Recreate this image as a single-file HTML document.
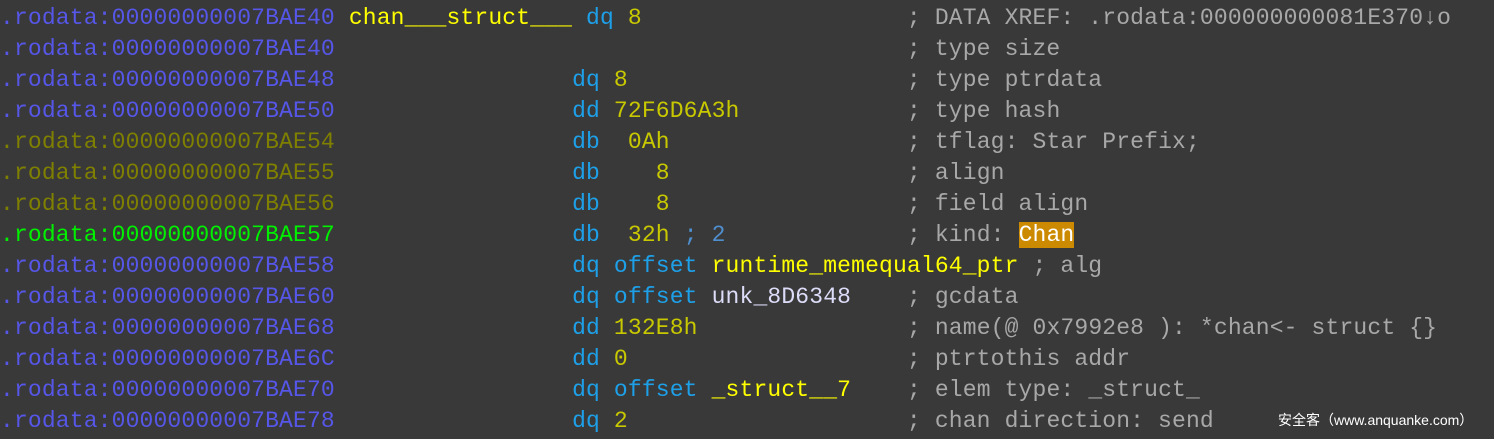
<!DOCTYPE html>
<html><head><meta charset="utf-8"><style>
html,body{margin:0;padding:0;background:#393939;width:1494px;height:439px;overflow:hidden}
pre{margin:0;position:absolute;left:0;top:3px;font-family:"Liberation Mono",monospace;font-size:23px;letter-spacing:0.15px;line-height:31px;color:#a8a8a8}
.a{color:#5656e8}.o{color:#7f7f00}.g{color:#00f000}.l{color:#ffff00}.m{color:#1ea0e8}.n{color:#c8c800}.c{color:#a8a8a8}.b{color:#4f8fd0}.u{color:#dcdcf8}
.h{background:#cc8a00;color:#fff}
.w{position:absolute;left:1278px;top:410px;font-family:"Liberation Sans","Noto Sans CJK SC",sans-serif;font-size:14px;color:#fff}
</style></head><body>
<pre><span class="a">.rodata:00000000007BAE40</span> <span class="l">chan___struct___</span> <span class="m">dq</span> <span class="n">8</span>                   <span class="c">; DATA XREF: .rodata:000000000081E370↓o</span>
<span class="a">.rodata:00000000007BAE40</span>                                         <span class="c">; type size</span>
<span class="a">.rodata:00000000007BAE48</span>                 <span class="m">dq</span> <span class="n">8</span>                    <span class="c">; type ptrdata</span>
<span class="a">.rodata:00000000007BAE50</span>                 <span class="m">dd</span> <span class="n">72F6D6A3h</span>            <span class="c">; type hash</span>
<span class="o">.rodata:00000000007BAE54</span>                 <span class="m">db</span>  <span class="n">0Ah</span>                 <span class="c">; tflag: Star Prefix;</span>
<span class="o">.rodata:00000000007BAE55</span>                 <span class="m">db</span>    <span class="n">8</span>                 <span class="c">; align</span>
<span class="o">.rodata:00000000007BAE56</span>                 <span class="m">db</span>    <span class="n">8</span>                 <span class="c">; field align</span>
<span class="g">.rodata:00000000007BAE57</span>                 <span class="m">db</span>  <span class="n">32h</span> <span class="b">; 2</span>             <span class="c">; kind: <span class="h">Chan</span></span>
<span class="a">.rodata:00000000007BAE58</span>                 <span class="m">dq offset</span> <span class="l">runtime_memequal64_ptr</span> <span class="c">; alg</span>
<span class="a">.rodata:00000000007BAE60</span>                 <span class="m">dq offset</span> <span class="u">unk_8D6348</span>    <span class="c">; gcdata</span>
<span class="a">.rodata:00000000007BAE68</span>                 <span class="m">dd</span> <span class="n">132E8h</span>               <span class="c">; name(@ 0x7992e8 ): *chan&lt;- struct {}</span>
<span class="a">.rodata:00000000007BAE6C</span>                 <span class="m">dd</span> <span class="n">0</span>                    <span class="c">; ptrtothis addr</span>
<span class="a">.rodata:00000000007BAE70</span>                 <span class="m">dq offset</span> <span class="l">_struct__7</span>    <span class="c">; elem type: _struct_</span>
<span class="a">.rodata:00000000007BAE78</span>                 <span class="m">dq</span> <span class="n">2</span>                    <span class="c">; chan direction: send</span></pre>
<div class="w">安全客（www.anquanke.com）</div>
</body></html>
